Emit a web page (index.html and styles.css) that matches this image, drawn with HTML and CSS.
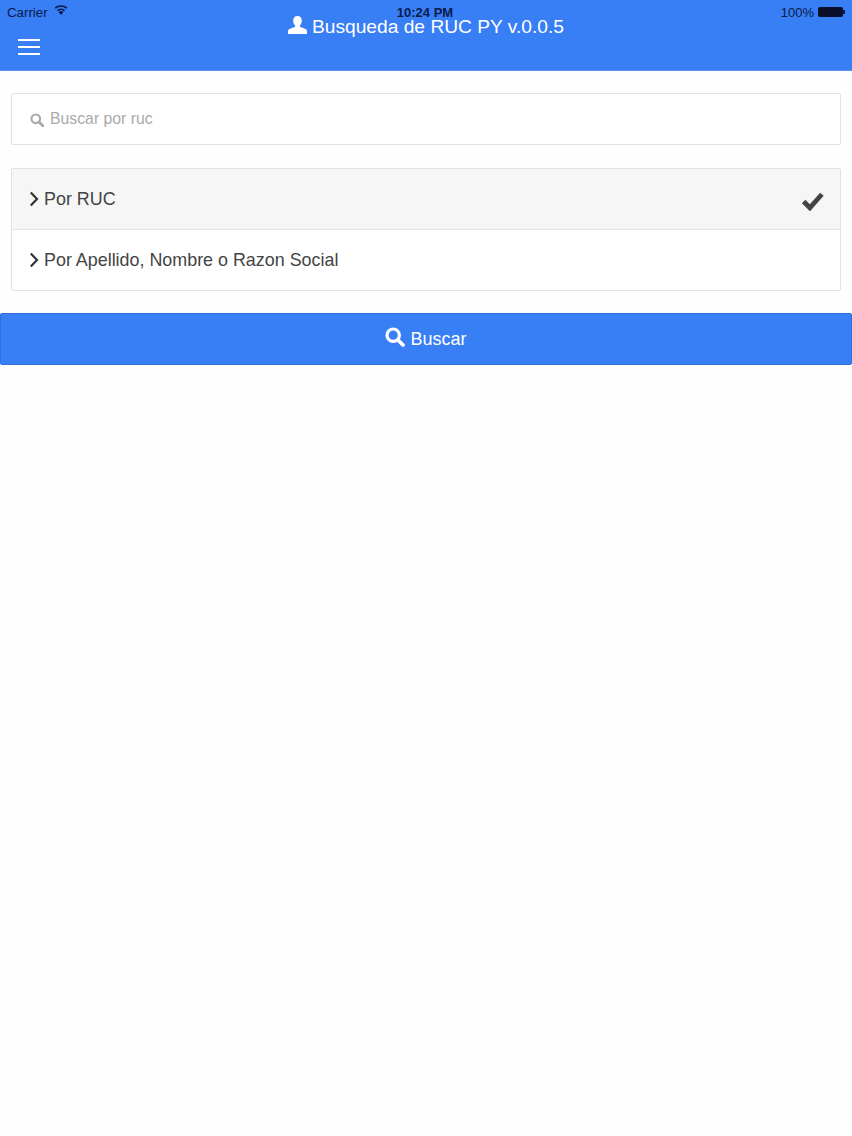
FILE: index.html
```html
<!DOCTYPE html>
<html lang="es">
<head>
<meta charset="utf-8">
<title>Busqueda de RUC PY</title>
<link rel="stylesheet" href="styles.css">
</head>
<body>
<header class="header">
  <div class="title">
    <svg class="person" viewBox="0 0 19 18" width="19" height="18"><path d="M9.500 0C6.700 0 5.200 2 5.200 4.700c0 2 .8 3.600 1.900 4.700v1.300L1.500 13C.5 13.500 0 14.200 0 15.300V18h19v-2.700c0-1.100-.5-1.800-1.500-2.300l-5.600-2.300V9.400C13 8.300 13.800 6.700 13.800 4.700 13.800 2 12.300 0 9.500 0Z" fill="#fff"/></svg>
    <span>Busqueda de RUC PY v.0.0.5</span>
  </div>
  <div class="status">
    <div class="status-left">
      <span>Carrier</span>
      <svg class="wifi" viewBox="0 0 14 10" width="14" height="10"><path d="M7 10 4.600 7.100a3.600 3.600 0 0 1 4.800 0Z" fill="#0a1a4a"/><path d="M3.400 5.700a5.400 5.400 0 0 1 7.200 0M1.200 3.200a8.600 8.600 0 0 1 11.600 0" fill="none" stroke="#0a1a4a" stroke-width="1.600"/></svg>
    </div>
    <div class="status-time">10:24 PM</div>
    <div class="status-right">
      <span>100%</span>
      <span class="battery"><span class="battery-fill"></span></span>
    </div>
  </div>
  <button class="menu" aria-label="Menu"><span></span><span></span><span></span></button>
</header>
<main class="content">
  <label class="search">
    <svg class="search-icon" viewBox="0 0 14 14" width="14" height="14"><circle cx="5.800" cy="5.800" r="4.300" fill="none" stroke="#aaa" stroke-width="2.200"/><path d="m9 9 4 4" stroke="#aaa" stroke-width="2.800" stroke-linecap="round"/></svg>
    <span class="placeholder">Buscar por ruc</span>
  </label>
  <ul class="list">
    <li class="item item-active">
      <svg class="chev" viewBox="0 0 10 16" width="10" height="16"><path d="M1.800 1.500 8 8l-6.200 6.500" fill="none" stroke="#333" stroke-width="2.200"/></svg>
      <span class="item-label">Por RUC</span>
      <svg class="check" viewBox="0 0 22 20" width="23" height="21"><path d="m2.500 11 6 6L20 4" fill="none" stroke="#444" stroke-width="4.600"/></svg>
    </li>
    <li class="item">
      <svg class="chev" viewBox="0 0 10 16" width="10" height="16"><path d="M1.800 1.500 8 8l-6.200 6.500" fill="none" stroke="#333" stroke-width="2.200"/></svg>
      <span class="item-label">Por Apellido, Nombre o Razon Social</span>
    </li>
  </ul>
  <button class="submit">
    <svg viewBox="0 0 20 20" width="20" height="20"><circle cx="8.200" cy="8.200" r="6.200" fill="none" stroke="#fff" stroke-width="3.200"/><path d="m13 13 5 5" stroke="#fff" stroke-width="3.800" stroke-linecap="round"/></svg>
    <span class="submit-label">Buscar</span>
  </button>
</main>
</body>
</html>
```
FILE: styles.css
```css
* { box-sizing: border-box; }
html, body { margin: 0; padding: 0; }
body {
  background: #fefefe;
  font-family: "Liberation Sans", Arial, sans-serif;
  color: #444;
  height: 1136px;
  overflow: hidden;
}
.header {
  position: relative;
  height: 71px;
  background: #387ef5;
  border-bottom: 1px solid #5a95f5;
  padding: 15px 17px 0;
}
.status {
  position: absolute;
  top: 4px;
  left: 7px;
  right: 7px;
  height: 16px;
  display: grid;
  grid-template-columns: 1fr auto 1fr;
  align-items: center;
  font-size: 13px;
  color: #0a1a4a;
}
.status-left { display: flex; align-items: center; gap: 6px; font-size: 13.3px; }
.wifi { margin-top: -4px; }
.status-time { font-weight: bold; margin-left: -2px; }
.status-right { display: flex; justify-content: flex-end; align-items: center; gap: 4px; }
.battery {
  display: block;
  width: 25px;
  height: 10px;
  margin-right: 2px;
  background: #0a0f2a;
  border-radius: 2px;
  position: relative;
}
.battery-fill {
  position: absolute;
  right: -2px;
  top: 3px;
  width: 2px;
  height: 4px;
  background: #0a1a4a;
}
.title {
  display: flex;
  justify-content: center;
  align-items: center;
  gap: 5px;
  color: #fff;
  font-size: 19.2px;
  line-height: 24px;
}
.person { margin-top: -5px; }
.menu {
  display: flex;
  flex-direction: column;
  gap: 5px;
  width: 24px;
  padding: 0;
  margin: 0 0 0 1px;
  border: 0;
  background: none;
}
.menu span { display: block; width: 22px; height: 2px; background: #fff; }
.content { padding: 22px 0 0; }
.search {
  display: flex;
  align-items: center;
  height: 52px;
  margin: 0 11px 23px;
  padding: 0 18px;
  background: #fff;
  border: 1px solid #e2e2e2;
  border-radius: 2px;
}
.search-icon { margin-top: 1px; margin-right: 6px; }
.placeholder { font-size: 15.8px; color: #aaa; margin-top: -1px; }
.list {
  list-style: none;
  margin: 0 11px 22px;
  padding: 0;
  border: 1px solid #e2e2e2;
  border-radius: 2px;
  background: #fff;
}
.item {
  display: flex;
  align-items: center;
  height: 61px;
  padding: 0 17px;
  font-size: 17.9px;
  color: #444;
}
.item-active { height: 60px; background: #f6f6f6; }
.item + .item { border-top: 1px solid #e2e2e2; }
.item-label { margin-left: 5px; flex: 1; padding-top: 1px; }
.check { margin-top: 2px; margin-right: -1px; }
.submit {
  display: flex;
  justify-content: center;
  align-items: center;
  gap: 5px;
  width: 100%;
  height: 52px;
  padding: 0;
  background: #387ef5;
  border: 1px solid #2f6fe0;
  border-radius: 2px;
  color: #fff;
  font-family: inherit;
  font-size: 18px;
}
.submit svg { margin-top: -4px; }
.submit-label { padding-top: 1px; }
```
